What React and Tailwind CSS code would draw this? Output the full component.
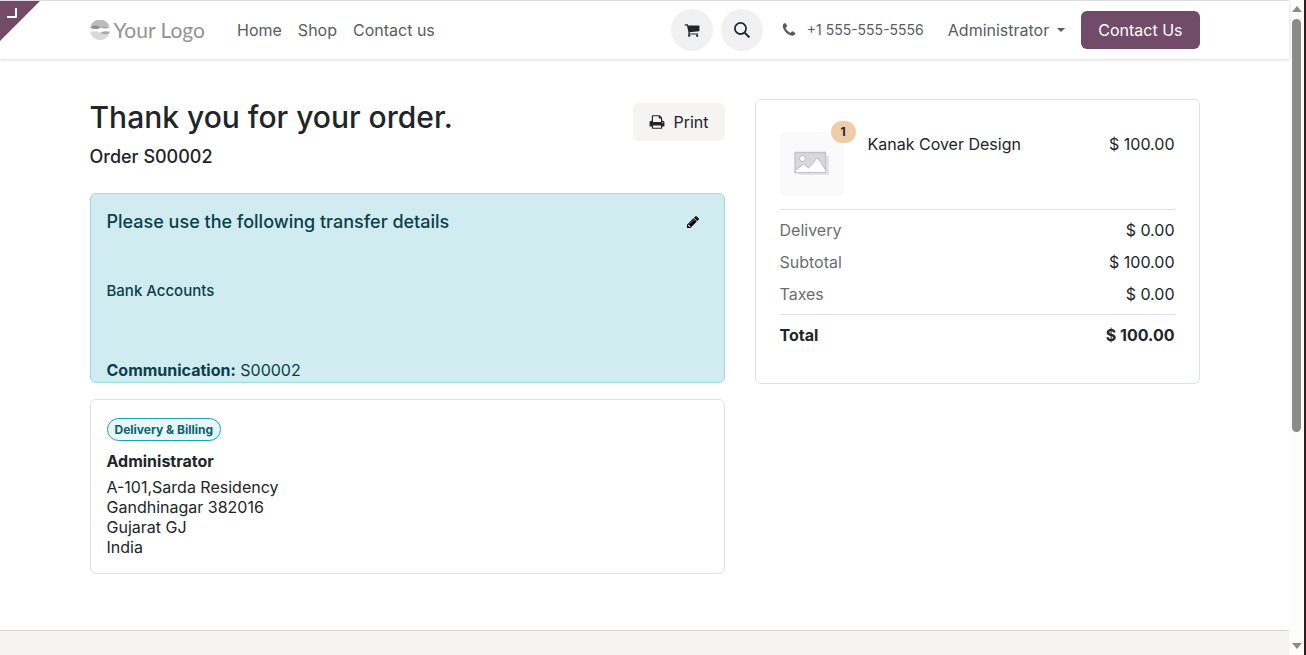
import React from 'react';

const icons = {
  cart: 'M704 1536q0 52-38 90t-90 38-90-38-38-90 38-90 90-38 90 38 38 90zm896 0q0 52-38 90t-90 38-90-38-38-90 38-90 90-38 90 38 38 90zm128-1088v512q0 24-16.5 42.5t-40.5 21.5l-1044 122q13 60 13 70 0 16-24 64h920q26 0 45 19t19 45-19 45-45 19h-1024q-26 0-45-19t-19-45q0-11 8-31.5t16-36 21.5-40 15.5-29.5l-177-823h-204q-26 0-45-19t-19-45 19-45 45-19h256q16 0 28.5 6.5t19.5 15.5 13 24.5 8 26 5.5 29.5 4.5 26h1201q26 0 45 19t19 45z',
  phone: 'M1600 1240q0 27-10 70.5t-21 68.5q-21 50-122 106-94 51-186 51-27 0-53-3.5t-57.5-12.5-47-14.5-55.5-20.5-49-18q-98-35-175-83-127-79-264-216t-216-264q-48-77-83-175-3-9-18-49t-20.5-55.5-14.5-47-12.5-57.5-3.5-53q0-92 51-186 56-101 106-122 25-11 68.5-21t70.5-10q14 0 21 3 18 6 53 76 11 19 30 54t35 63.5 31 53.5q3 4 17.5 25t21.5 35.5 7 28.5q0 20-28.5 50t-62 55-62 53-28.5 46q0 9 5 22.5t8.5 20.5 14 24 11.5 19q76 137 174 235t235 174q2 1 19 11.5t24 14 20.5 8.5 22.5 5q18 0 46-28.5t53-62 55-62 50-28.5q14 0 28.5 7t35.5 21.5 25 17.5q25 15 53.5 31t63.5 35 54 30q70 35 76 53 3 7 3 21z',
  print: 'M448 1536h896v-256h-896v256zm0-640h896v-384h-160q-40 0-68-28t-28-68v-160h-640v640zm1152 64q0-26-19-45t-45-19-45 19-19 45 19 45 45 19 45-19 19-45zm128 0v416q0 13-9.5 22.5t-22.5 9.5h-224v160q0 40-28 68t-68 28h-960q-40 0-68-28t-28-68v-160h-224q-13 0-22.5-9.5t-9.5-22.5v-416q0-79 56.5-135.5t135.5-56.5h64v-544q0-40 28-68t68-28h672q40 0 88 20t76 48l152 152q28 28 48 76t20 88v256h64q79 0 135.5 56.5t56.5 135.5z',
  pencil: 'M491 1536l91-91-235-235-91 91v107h128v128h107zm523-928q0-22-22-22-10 0-17 7l-542 542q-7 7-7 17 0 22 22 22 10 0 17-7l542-542q7-7 7-17zm-54-192l416 416-832 832h-416v-416zm683 96q0 53-37 90l-166 166-416-416 166-165q36-38 90-38 53 0 91 38l235 234q37 39 37 91z',
};

const Icon = ({ name, className }) => (
  <svg viewBox="0 0 1792 1792" className={className} fill="currentColor" aria-hidden="true">
    <path d={icons[name]} />
  </svg>
);

const Logo = () => (
  <a href="#" className="flex items-center gap-1 text-[#949494]">
    <svg viewBox="0 0 20 20" className="size-5" aria-hidden="true">
      <path d="M0.300 7A10 10 0 0 1 19.700 7C15 5.500 13.500 7.600 10 7.600C6 7.600 4.500 5 0.300 7Z" fill="#bcbcbc" />
      <path d="M0.200 7.800C3 4.800 6.500 5 10.500 7.400C8.500 9.200 3.500 9.600 0.200 7.800Z" fill="#8f8f8f" />
      <path d="M10 7.600C13 5.600 17 5.800 19.800 7.800C16.500 8.900 13 8.900 10 7.600Z" fill="#a8a8a8" />
      <path d="M0.200 11.800C4 10.600 8 11.200 11 13.200C14 14.800 17 14.800 19.600 13A10 10 0 0 1 0.200 11.800Z" fill="#d9d9d9" />
      <path d="M10 13C12.500 11.200 16.500 10.800 20 11.800C18.500 14.800 14 15.200 10 13Z" fill="#ababab" />
    </svg>
    <span className="font-[Lato,sans-serif] text-[21px] leading-6">Your Logo</span>
  </a>
);

const navLinks = ['Home', 'Shop', 'Contact us'];

const Header = () => (
  <header className="border-t border-[#dcdcdc] bg-white shadow-[0_1px_3px_rgba(0,0,0,0.15)]">
    <div className="mx-auto flex h-[58px] max-w-[1140px] items-center px-[15px] text-[#5a5c5e]">
      <Logo />
      <nav className="ml-6 flex grow">
        {navLinks.map((label) => (
          <a key={label} href="#" className="px-2">{label}</a>
        ))}
      </nav>
      <div className="flex items-center gap-2 text-[#212529]">
        <a href="#" aria-label="Cart" className="flex size-[42px] items-center justify-center rounded-full bg-[#f1f1f1]">
          <Icon name="cart" className="size-4" />
        </a>
        <button type="button" aria-label="Search" className="flex size-[42px] items-center justify-center rounded-full bg-[#f1f1f1]">
          <svg viewBox="0 0 16 16" className="size-4" fill="none" stroke="currentColor" aria-hidden="true">
            <circle cx="6.500" cy="6.500" r="5.600" strokeWidth="1.700" />
            <path d="M10.600 10.600L15.400 15.400" strokeWidth="2" />
          </svg>
        </button>
      </div>
      <a href="tel:+15555555556" className="ml-[18px] flex items-center gap-[10px] text-sm">
        <Icon name="phone" className="size-4" />
        +1 555-555-5556
      </a>
      <button type="button" className="ml-6 flex items-center gap-2">
        Administrator
        <svg viewBox="0 0 8 4" className="h-1 w-2" fill="currentColor" aria-hidden="true">
          <path d="M0 0H8L4 4Z" />
        </svg>
      </button>
      <a href="#" className="ml-4 flex h-[38px] items-center rounded-md bg-[#714b67] px-[17px] text-white">
        Contact Us
      </a>
    </div>
  </header>
);

const TransferDetails = () => (
  <section className="mt-6 rounded-md border border-[#9fd9e1] bg-[#d1ecf0] px-4 pt-4 text-[#09414a]">
    <div className="flex items-center justify-between">
      <h4 className="text-lg leading-6 font-medium">Please use the following transfer details</h4>
      <button type="button" aria-label="Edit" className="mr-2 text-black">
        <Icon name="pencil" className="size-[14px]" />
      </button>
    </div>
    <h5 className="mt-[45px] text-[15px] leading-6 font-medium">Bank Accounts</h5>
    <p className="mt-[55px]">
      <b>Communication:</b> S00002
    </p>
  </section>
);

const address = ['A-101,Sarda Residency', 'Gandhinagar 382016', 'Gujarat GJ', 'India'];

const AddressCard = () => (
  <section className="mt-4 rounded-md border border-[#dee2e6] px-4 pt-[18px] pb-4">
    <span className="flex h-[23px] w-fit items-center rounded-full border border-[#17a2b8] bg-[#e8f6f8] px-[7px] text-xs font-bold text-[#0c6270]">
      Delivery &amp; Billing
    </span>
    <p className="mt-2 font-bold">Administrator</p>
    <address className="mt-1 leading-5 not-italic">
      {address.map((line) => (
        <div key={line}>{line}</div>
      ))}
    </address>
  </section>
);

const Placeholder = () => (
  <svg viewBox="0 0 64 64" className="size-16 rounded-md bg-[#fafafa]" aria-hidden="true">
    <path d="M19 24H49V43H19Z" fill="#e4e4e6" />
    <path d="M15 20.500H45.500V40.500H15Z" fill="#d9d9d9" stroke="#c3c3ca" strokeWidth="1.400" />
    <path d="M16 40V38L23.500 32L28.500 36L37.500 25.500L45 37V40Z" fill="#ffffff" />
    <path d="M16 38L23.500 32L28.500 36L37.500 25.500L45 37" fill="none" stroke="#b8b8bf" />
    <circle cx="22.500" cy="26.500" r="3" fill="#ffffff" stroke="#b8b8bf" />
  </svg>
);

const amounts = [
  { label: 'Delivery', value: '$ 0.00' },
  { label: 'Subtotal', value: '$ 100.00' },
  { label: 'Taxes', value: '$ 0.00' },
];

const OrderSummary = () => (
  <aside className="rounded-md border border-[#dee2e6] px-6 pt-8 pb-9">
    <div className="flex border-b border-[#dee2e6] pb-[13px]">
      <div className="relative">
        <Placeholder />
        <span className="absolute -top-[11px] -right-3 flex h-[22px] w-[25px] items-center justify-center rounded-full bg-[#f0cba8] text-xs font-bold">
          1
        </span>
      </div>
      <span className="ml-6 grow">Kanak Cover Design</span>
      <span>$ 100.00</span>
    </div>
    <table className="mt-1 w-full">
      <tbody className="[&>tr:last-child>*]:pb-2">
        {amounts.map(({ label, value }) => (
          <tr key={label}>
            <th scope="row" className="py-1 text-left font-normal text-[#6b6e71]">{label}</th>
            <td className="py-1 text-right">{value}</td>
          </tr>
        ))}
      </tbody>
      <tfoot className="border-t border-[#dee2e6] font-bold">
        <tr>
          <th scope="row" className="pt-2 text-left">Total</th>
          <td className="pt-2 text-right">$ 100.00</td>
        </tr>
      </tfoot>
    </table>
  </aside>
);

const Scrollbar = () => (
  <div className="flex w-[17px] shrink-0 flex-col items-center border-r-2 border-[#331c1c] bg-[#fcfcfc] py-[6px]" aria-hidden="true">
    <svg viewBox="0 0 10 6" className="h-[6px] w-[10px]" fill="#8b8b8b">
      <path d="M0 6L5 0L10 6Z" />
    </svg>
    <div className="my-[7px] flex w-full grow flex-col items-center">
      <div className="h-[67%] w-[9px] rounded-full bg-[#8b8b8b]" />
    </div>
    <svg viewBox="0 0 10 6" className="h-[6px] w-[10px]" fill="#8b8b8b">
      <path d="M0 0H10L5 6Z" />
    </svg>
  </div>
);

const App = () => (
  <div className="flex min-h-screen bg-white font-[Inter,sans-serif] text-base text-[#212529]">
    <div className="relative flex min-w-0 grow flex-col">
      <svg viewBox="0 0 40 40" className="absolute top-px left-0 size-10" aria-hidden="true">
        <path d="M0 0H40L0 40Z" fill="#714b67" />
        <path d="M7 16H16V7" fill="none" stroke="#ffffff" strokeWidth="2" />
      </svg>
      <Header />
      <main className="mx-auto grid w-full max-w-[1140px] grid-cols-12 gap-x-[30px] px-[15px] pt-10 pb-14">
        <div className="col-span-7">
          <div className="flex items-start justify-between">
            <div>
              <h1 className="text-3xl leading-9 font-medium">Thank you for your order.</h1>
              <h4 className="mt-[10px] text-lg leading-6 font-medium">Order S00002</h4>
            </div>
            <button type="button" className="mt-1 flex h-[38px] items-center gap-2 rounded-md bg-[#f5f4f3] px-4">
              <Icon name="print" className="size-4" />
              Print
            </button>
          </div>
          <TransferDetails />
          <AddressCard />
        </div>
        <div className="col-span-5">
          <OrderSummary />
        </div>
      </main>
      <footer className="grow border-t border-[#d3d3d3] bg-[#f5f4f3]" />
    </div>
    <Scrollbar />
  </div>
);

export default App;
